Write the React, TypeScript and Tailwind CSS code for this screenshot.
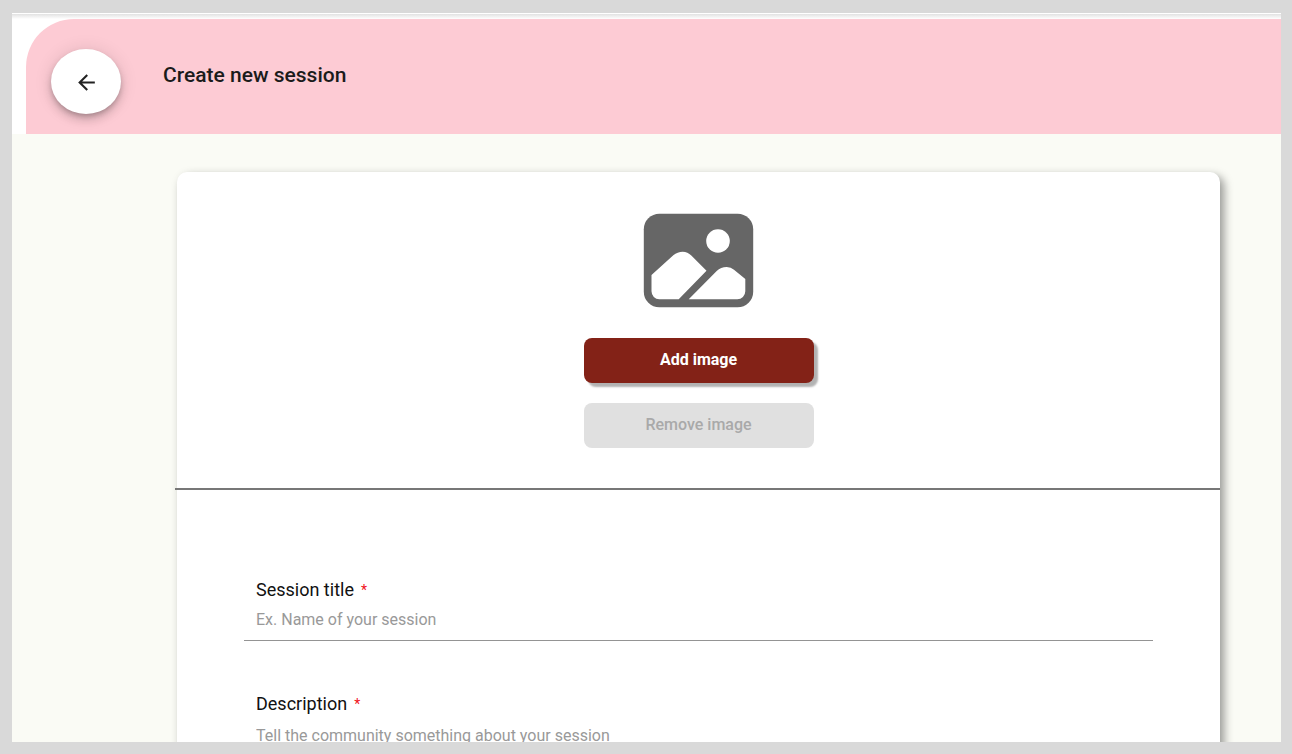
import type { ReactNode } from "react";

function BackIcon() {
  return (
    <svg viewBox="0 0 24 24" className="size-[25px] fill-[#222222]" aria-hidden="true">
      <path d="M20 11H7.83l5.59-5.59L12 4l-8 8 8 8 1.41-1.41L7.83 13H20v-2z" />
    </svg>
  );
}

function ImagePlaceholder() {
  return (
    <svg viewBox="0 0 111 95" className="h-[95px] w-[111px]" aria-hidden="true">
      <rect x="0.8" y="0.7" width="109.4" height="93.6" rx="15.6" fill="#666666" />
      <circle cx="75" cy="28" r="11.8" fill="#fff" />
      <path
        fill="#fff"
        d="M8.5 62 L30.3 42.3 Q34.5 38.7 39.7 38.7 Q44.7 38.9 48.3 42.6 L63.5 57.7 L35.7 86.3 H16.3 A8 8 0 0 1 8.5 78.3 Z"
      />
      <path
        fill="#fff"
        d="M45.7 86.3 L73.7 58 Q77.8 54 83.7 54 Q88 54 91 56.8 L102.3 66 V78.3 A8 8 0 0 1 94.3 86.3 Z"
      />
    </svg>
  );
}

function Field({ id, label, children }: { id: string; label: string; children: ReactNode }) {
  return (
    <div className="flex flex-col border-b border-[#949494] px-3">
      <label htmlFor={id} className="flex items-center gap-[7px] text-lg leading-6 text-[#111111]">
        {label}
        <span className="text-sm leading-6 text-[#f01020]">*</span>
      </label>
      {children}
    </div>
  );
}

export default function App() {
  return (
    <div className="h-screen bg-[#d9d9d9] pt-[13px] pr-[11px] pb-3 pl-3 font-['Roboto',sans-serif]">
      <div className="flex h-full flex-col overflow-hidden bg-white">
        <div className="mt-px h-[5px] shrink-0 bg-linear-to-b from-[#e2e2e2] to-white" />
        <header className="ml-3.5 flex h-[115px] shrink-0 items-start rounded-tl-[48px] bg-[#fdcbd4] pl-[25px]">
          <button
            type="button"
            aria-label="Back"
            className="mt-[30px] flex h-[65px] w-[70px] items-center justify-center rounded-[50%] bg-white pt-0.5 shadow-[0_3px_5px_-1px_rgba(0,0,0,0.2),0_6px_10px_0_rgba(0,0,0,0.14),0_1px_18px_0_rgba(0,0,0,0.12)]"
          >
            <BackIcon />
          </button>
          <h1 className="mt-10 ml-[42px] text-[21px] leading-8 font-medium text-[#1b1b1b]">Create new session</h1>
        </header>
        <main className="min-h-0 grow overflow-hidden bg-[#fafbf5] pt-[38px] pr-[61px] pl-[165px]">
          <form className="rounded-[10px] bg-white pb-16 shadow-[4px_4px_10px_rgba(0,0,0,0.4)]">
            <section className="-ml-0.5 flex flex-col items-center border-b-2 border-[#777777] pt-[41px] pb-10 pl-0.5">
              <ImagePlaceholder />
              <button
                type="button"
                className="mt-[30px] h-[45px] w-[230px] rounded-lg bg-[#832217] pb-px text-base font-bold text-white shadow-[4px_4px_2px_rgba(0,0,0,0.3)]"
              >
                Add image
              </button>
              <button
                type="button"
                disabled
                className="mt-5 h-[45px] w-[230px] rounded-lg bg-[#e0e0e0] pb-px text-base font-medium text-[#a9a9a9]"
              >
                Remove image
              </button>
            </section>
            <section className="flex flex-col gap-[51px] px-[67px] pt-[88px]">
              <Field id="session-title" label="Session title">
                <input
                  id="session-title"
                  type="text"
                  required
                  placeholder="Ex. Name of your session"
                  className="mt-1.5 mb-2 h-6 w-full text-base text-[#222222] outline-none placeholder:text-[#999999]"
                />
              </Field>
              <Field id="description" label="Description">
                <textarea
                  id="description"
                  required
                  rows={4}
                  placeholder="Tell the community something about your session"
                  className="mt-2 mb-2 w-full resize-none text-base text-[#222222] outline-none placeholder:text-[#999999]"
                />
              </Field>
            </section>
          </form>
        </main>
      </div>
    </div>
  );
}
